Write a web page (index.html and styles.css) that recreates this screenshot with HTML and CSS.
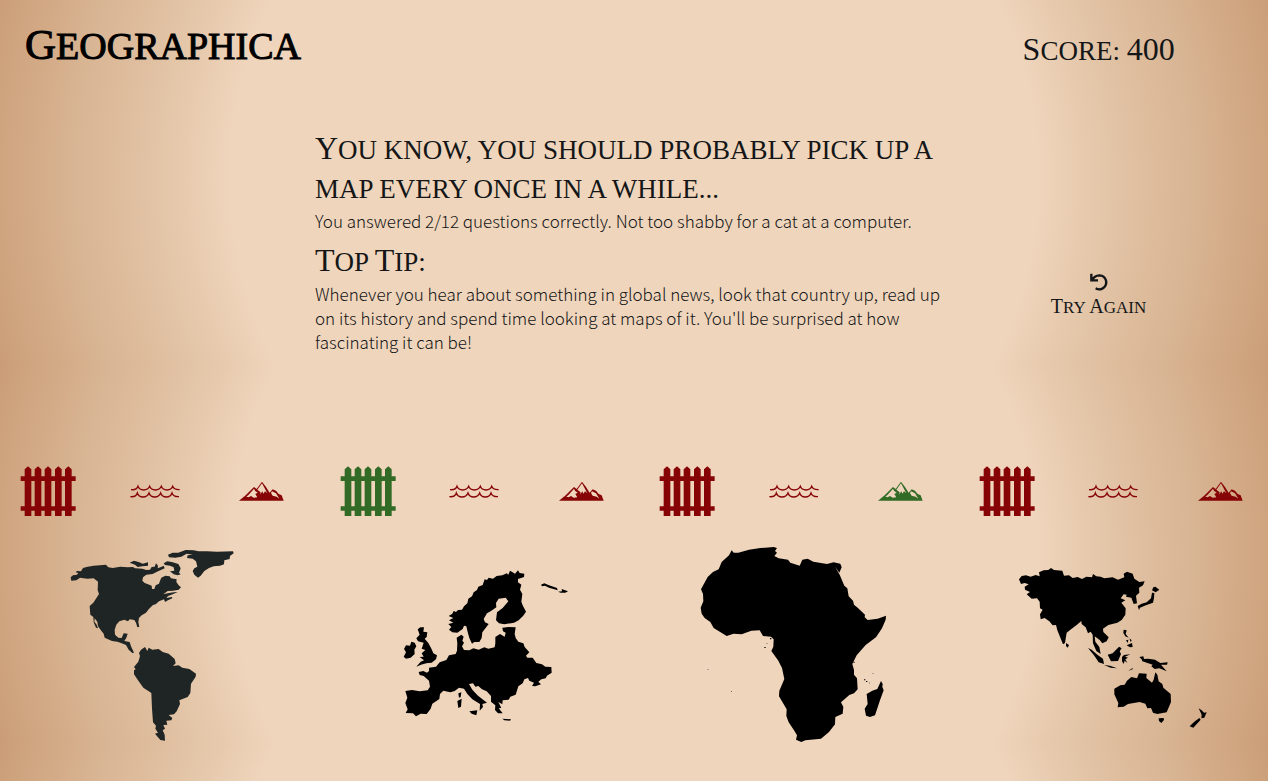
FILE: index.html
```html
<!DOCTYPE html>
<html lang="en">
<head>
<meta charset="utf-8">
<meta name="viewport" content="width=device-width, initial-scale=1">
<title>Geographica</title>
<link rel="stylesheet" href="styles.css">
</head>
<body>
<svg class="defs" aria-hidden="true">
  <symbol id="fence" viewBox="61 32 168 150">
    <path d="M63 63H75V42L85 33L95 42V63H105V42L115 33L125 42V63H135V42L145 33L155 42V63H166V42L176 33L186 42V63H196V42L206 33L216 42V63H228V77H216V153H228V166H216V183H196V166H186V183H166V166H155V183H135V166H125V183H105V166H95V183H75V166H63V153H75V77H63ZM95 77V153H105V77ZM125 77V153H135V77ZM155 77V153H166V77ZM186 77V153H196V77Z"/>
  </symbol>
  <symbol id="waves" viewBox="381 32 168 150">
    <path class="wave" d="M393 103Q410 105 414 93Q418 104 431 104T449 93Q453 104 466 104T484 93Q488 104 501 104T518 93Q522 104 539 103M391 124Q408 126 412 113Q416 125 429 125T447 113Q451 125 464 125T482 113Q486 125 499 125T516 113Q520 125 537 124"/>
  </symbol>
  <symbol id="mountain" viewBox="701 32 168 150">
    <path fill-rule="evenodd" d="M719 136L739 120L764 95L772 101L788 79L800 95L811 112L820 102L830 106L838 116L847 120L853 136ZM764 100L748 118L741 124L748 126L755 122L763 127L774 126L768 116L775 112L767 106ZM788 84L774 103L784 111L782 118L789 108L792 115L797 108L804 114L796 99ZM818 108L815 113L820 121L832 124L840 130L830 114L824 111Z"/>
  </symbol>
</svg>

<header class="top">
  <h1 class="brand">Geographica</h1>
  <p class="score">Score: <span class="cap">400</span></p>
</header>

<main class="result">
  <section class="report">
    <h2 class="heading">You know, you should probably pick up a map every once in a while...</h2>
    <p class="copy">You answered 2/12 questions correctly. Not too shabby for a cat at a computer.</p>
    <h2 class="heading">Top <span class="cap">T</span>ip:</h2>
    <p class="copy">Whenever you hear about something in global news, look that country up, read up on its history and spend time looking at maps of it. You'll be surprised at how fascinating it can be!</p>
  </section>
  <button class="retry" type="button">
    <svg class="retry-icon" viewBox="0 0 60 60" aria-hidden="true"><path d="M7 5V25H27M9 24Q16 11 31 10A21 21 0 1 1 20 49"/></svg>
    <span class="retry-label"><span class="cap">T</span>ry <span class="cap">A</span>gain</span>
  </button>
</main>

<section class="regions" aria-label="Results by region">
  <article class="region">
    <div class="marks">
      <svg class="mark wrong"><use href="#fence"/></svg>
      <svg class="mark wrong"><use href="#waves"/></svg>
      <svg class="mark wrong"><use href="#mountain"/></svg>
    </div>
    <svg class="map slate" viewBox="-31 0 630 630" role="img" aria-label="The Americas">
      <path d="M31 112L38 106L50 104L54 99L46 97L50 93L62 94L68 84L82 80L100 77L137 74L144 82L157 84L180 80L202 82L218 81L224 85L246 86L258 90L269 89L274 81L283 80L287 70L293 77L292 85L304 80L310 77L313 85L300 91L290 95L277 102L258 104L248 112L246 122L253 129L267 134L274 137L275 147L282 147L286 136L296 131L299 122L303 113L315 107L328 109L332 115L349 118L348 126L355 136L362 142L355 149L339 152L322 153L309 163L322 160L340 157L352 156L337 163L323 168L318 174L335 171L336 175L323 181L314 186L311 178L296 184L286 193L278 195L265 208L257 218L244 226L236 234L234 246L237 260L231 262L227 248L222 240L208 238L203 244L192 239L177 244L168 254L163 269L164 284L174 293L184 294L190 280L202 281L198 293L192 303L208 306L212 319L221 338L216 339L205 329L197 315L184 310L171 305L155 303L133 293L130 281L124 274L113 259L111 245L103 235L102 245L109 254L113 265L107 263L100 247L99 231L90 224L88 198L99 188L116 162L112 151L113 125L100 115L81 116L59 113L48 121L33 122Z"/>
      <path d="M208 68L221 62L237 67L247 71L263 67L263 77L246 79L232 81L224 74ZM310 70L321 64L337 67L354 72L361 85L356 98L361 103L352 106L340 103L329 94L342 92L340 82L329 77L314 75ZM323 44L337 38L354 38L376 30L400 31L414 34L440 34L470 35L518 34L520 40L509 48L508 57L492 61L491 73L479 77L460 79L446 84L432 93L421 107L413 113L402 104L397 93L402 85L411 80L407 64L397 56L380 54L382 46L397 44L379 41L363 50L345 53L326 52Z"/>
      <path d="M254 321L261 333L265 323L276 329L295 327L307 336L325 341L343 357L346 370L338 378L355 376L366 383L387 387L407 401L406 410L392 431L390 459L382 471L357 481L359 492L349 514L341 523L325 525L336 534L333 541L318 542L321 554L309 555L314 566L307 571L313 584L314 602L300 600L284 581L293 578L285 566L287 557L278 547L275 506L273 459L249 443L234 422L221 403L221 391L226 388L221 381L234 365L239 348L236 339L242 329Z"/>
    </svg>
  </article>

  <article class="region">
    <div class="marks">
      <svg class="mark right"><use href="#fence"/></svg>
      <svg class="mark wrong"><use href="#waves"/></svg>
      <svg class="mark wrong"><use href="#mountain"/></svg>
    </div>
    <svg class="map" viewBox="-77 -60 630 630" role="img" aria-label="Europe">
      <path d="M162 168L173 161L177 153L184 156L190 150L202 149L208 139L218 130L221 116L232 109L237 97L247 90L251 80L264 75L270 58L277 60L282 53L295 56L306 48L323 46L336 40L341 44L346 32L354 37L361 41L370 31L375 39L389 41L388 51L370 57L370 67L380 74L376 89L383 102L380 125L384 136L394 155L385 168L372 181L358 188L329 193L313 190L304 181L307 157L324 144L341 124L333 113L312 116L304 129L305 142L289 153L277 160L267 177L271 187L282 192L270 208L263 217L261 234L254 246L239 246L232 251L224 234L219 216L215 199L208 197L204 207L188 218L173 217L163 209L170 201L161 192L176 188L163 181L176 174Z"/>
      <path d="M323 203L342 201L363 202L360 222L363 234L371 245L386 250L390 261L404 277L394 287L398 293L414 293L425 309L442 313L452 320L470 321L471 338L457 347L453 355L440 358L431 365L439 373L422 379L412 378L418 368L404 362L400 354L389 358L384 370L371 379L363 404L347 410L342 419L324 421L323 433L311 426L320 444L312 445L324 460L310 460L301 450L302 436L289 425L289 408L276 394L262 388L251 378L242 380L235 370L223 372L233 389L250 407L277 428L263 432L265 441L255 452L256 432L233 418L218 402L208 386L193 383L180 393L167 397L146 392L136 402L134 417L113 431L108 446L96 462L78 461L64 469L55 460L33 459L39 448L32 429L38 413L32 393L52 390L75 394L99 391L106 380L103 362L87 348L75 345L72 336L86 333L97 338L103 333L103 323L124 320L135 307L155 300L163 286L183 282L187 272L188 250L186 233L200 224L207 230L203 242L208 248L202 259L208 270L224 271L236 265L252 269L269 262L281 266L300 262L302 250L302 231L316 222L330 230L333 218L325 214Z"/>
      <path d="M69 208L77 202L88 202L86 215L98 217L96 231L90 236L101 249L111 268L116 280L127 286L124 298L111 308L95 310L79 314L65 320L78 305L88 301L75 291L87 290L81 280L92 270L81 266L87 248L70 244L65 235L75 224ZM27 290L34 277L28 267L34 256L46 257L50 245L60 248L65 259L59 269L60 282L48 293L34 296ZM191 400L200 397L198 411L193 413ZM188 423L201 416L199 440L191 444ZM224 454L248 451L245 466L231 461ZM323 476L349 478L346 482L329 481ZM439 74L449 70L463 76L487 84L489 91L463 83L451 77L442 79ZM490 95L502 94L501 87L520 94L512 98L498 98Z"/>
    </svg>
  </article>

  <article class="region">
    <div class="marks">
      <svg class="mark wrong"><use href="#fence"/></svg>
      <svg class="mark wrong"><use href="#waves"/></svg>
      <svg class="mark right"><use href="#mountain"/></svg>
    </div>
    <svg class="map" viewBox="-4 0 630 630" role="img" aria-label="Africa">
      <path d="M124 31L130 38L144 38L176 29L210 24L250 21L260 24L254 33L260 38L252 48L265 55L293 59L300 68L328 77L336 59L352 56L369 65L410 72L430 67L450 71L454 82L447 98L434 80L448 104L462 137L471 145L475 169L488 182L491 194L502 203L524 224L523 232L532 240L562 236L587 227L586 239L575 265L557 292L526 315L499 346L486 372L491 390L491 404L500 415L502 448L491 460L477 465L452 487L459 501L457 521L435 531L434 553L416 576L392 596L345 601L333 606L317 599L320 586L311 571L295 547L288 528L289 508L266 469L267 452L282 417L275 384L264 362L243 333L249 320L250 298L242 290L218 288L208 271L183 272L154 283L130 281L109 288L70 264L60 246L43 234L34 221L31 203L39 184L38 162L32 148L52 111L68 96L85 88L94 66L116 46Z"/>
      <path d="M572 423L577 432L576 441L580 451L569 481L554 526L539 531L527 527L523 506L532 492L529 462L546 452L561 447Z"/>
      <path d="M239 294h4v4h-4ZM222 321h4v3h-4ZM229 310h2v2h-2ZM521 418h4v3h-4ZM527 423h4v3h-4ZM536 428h3v2h-3ZM547 400h2v2h-2ZM52 387h2v2h-2ZM123 454h2v2h-2ZM489 365h4v3h-4Z"/>
    </svg>
  </article>

  <article class="region">
    <div class="marks">
      <svg class="mark wrong"><use href="#fence"/></svg>
      <svg class="mark wrong"><use href="#waves"/></svg>
      <svg class="mark wrong"><use href="#mountain"/></svg>
    </div>
    <svg class="map" viewBox="-5 -60 630 630" role="img" aria-label="Asia and Oceania">
      <path d="M28 58L36 48L49 46L63 50L78 45L90 49L88 37L102 31L116 30L124 24L133 30L158 32L163 47L178 46L189 54L204 51L217 57L230 50L247 52L250 42L260 49L273 50L284 55L309 52L325 59L344 52L342 41L352 35L369 41L374 56L389 66L405 64L400 76L388 83L389 98L379 107L382 130L372 132L365 113L349 110L351 104L342 103L333 115L347 121L335 128L348 145L347 164L336 180L323 188L296 195L280 206L281 216L297 232L291 244L278 250L270 240L255 229L257 245L269 261L273 282L260 273L250 250L249 224L243 215L235 220L228 202L216 192L215 183L202 194L185 207L171 218L166 249L160 253L143 211L139 195L129 196L119 184L105 174L93 178L91 163L99 149L91 145L90 125L82 115L66 116L51 103L61 96L46 89L45 80L57 73L45 69L34 72Z"/>
      <path d="M169 249L178 255L174 263L169 258ZM431 82L437 80L449 89L438 97L427 91ZM427 98L434 99L433 114L430 128L419 132L405 137L391 143L388 150L384 138L396 131L411 127L424 115ZM342 209L351 211L348 222L357 233L347 229L341 219ZM359 235L366 241L363 246ZM349 241L356 239L354 249ZM351 256L367 249L369 261L361 262ZM235 264L246 269L264 285L280 296L283 312L267 307L254 287ZM283 315L301 317L322 325L303 323ZM294 284L309 280L328 260L336 265L330 274L334 282L325 303L304 304ZM337 291L343 285L362 283L346 290L355 293L347 298L353 309L345 302L342 312L337 304ZM356 332L369 324L369 328ZM389 291L401 289L403 297L416 296L436 299L452 309L474 307L472 314L454 314L471 334L449 325L435 327L425 319L429 314L398 304L396 298Z"/>
      <path d="M437 337L443 344L447 364L458 372L461 383L483 402L484 426L471 457L443 462L430 458L424 444L413 445L407 431L390 426L355 432L342 440L324 442L326 429L314 403L314 386L332 376L345 374L352 362L365 351L382 355L388 340L411 341L410 354L427 368L432 359ZM447 475L462 474L463 480L455 489L448 483ZM567 445L576 451L583 458L591 457L584 473L575 475L576 464ZM569 474L573 479L562 491L551 503L540 499L553 486Z"/>
    </svg>
  </article>
</section>
</body>
</html>
```
FILE: styles.css
```css
*, *::before, *::after { box-sizing: border-box; }

body {
  margin: 0;
  min-height: 100vh;
  overflow-x: hidden;
  color: #141617;
  font-family: "Noto Sans CJK SC", "Noto Sans", sans-serif;
  background-color: #efd5bc;
  background-image: radial-gradient(circle farthest-corner at center, #efd5bc 61%, #e2c3a5 73%, #d7b391 86%, #d5ac89 90%, #cfa680 95%, #ca9d78 100%);
  background-size: 100% 377px;
  background-position: 0 -11px;
}

h1, h2, p { margin: 0; font-weight: 400; }

.defs { position: absolute; width: 0; height: 0; }

.top {
  display: grid;
  grid-template-columns: 3fr 1fr;
  align-items: start;
  padding: 19px 16px 0 25px;
}

.brand, .score, .heading, .retry-label {
  font-family: "Liberation Serif", serif;
  text-transform: uppercase;
}

.brand { color: #000; font-size: 38px; line-height: 52px; -webkit-text-stroke: 1px #000; }
.brand::first-letter { font-size: 43px; }

.score { font-size: 27px; line-height: 52px; padding-top: 4px; text-align: center; }
.score::first-letter, .score .cap { font-size: 32px; }

.result {
  display: grid;
  grid-template-columns: 1fr 2fr 1fr;
  align-items: center;
  padding: 54px 0 112px;
}

.report { grid-column: 2; margin-left: -2px; }

.heading { font-size: 27px; line-height: 39px; }
.heading::first-letter, .heading .cap { font-size: 32px; line-height: 32px; }

.copy { font-size: 17px; line-height: 24px; font-weight: 300; }
.copy + .heading { margin-top: 10px; }

.retry {
  justify-self: center;
  display: flex;
  flex-direction: column;
  align-items: center;
  gap: 2px;
  margin: 106px 22px 0 0;
  padding: 0;
  border: 0;
  background: none;
  color: inherit;
  cursor: pointer;
}
.retry-icon { width: 20px; height: 20px; fill: none; stroke: currentColor; stroke-width: 7; }
.retry-label { font-size: 17px; line-height: 24px; }
.retry-label .cap { font-size: 20px; }

.regions {
  display: grid;
  grid-template-columns: repeat(4, 1fr);
  margin: 0 -5px;
}

.region { display: grid; gap: 24px; justify-items: center; padding-bottom: 31px; }

.marks {
  display: grid;
  grid-template-columns: repeat(3, 1fr);
  justify-items: center;
  width: 100%;
}

.mark { width: 56px; height: 50px; fill: currentColor; }
.wrong { color: #870406; }
.right { color: #326b26; }
.wave { fill: none; stroke: currentColor; stroke-width: 4; }

.map { width: 210px; height: 210px; fill: #000; }
.slate { fill: #1f2424; }
```
